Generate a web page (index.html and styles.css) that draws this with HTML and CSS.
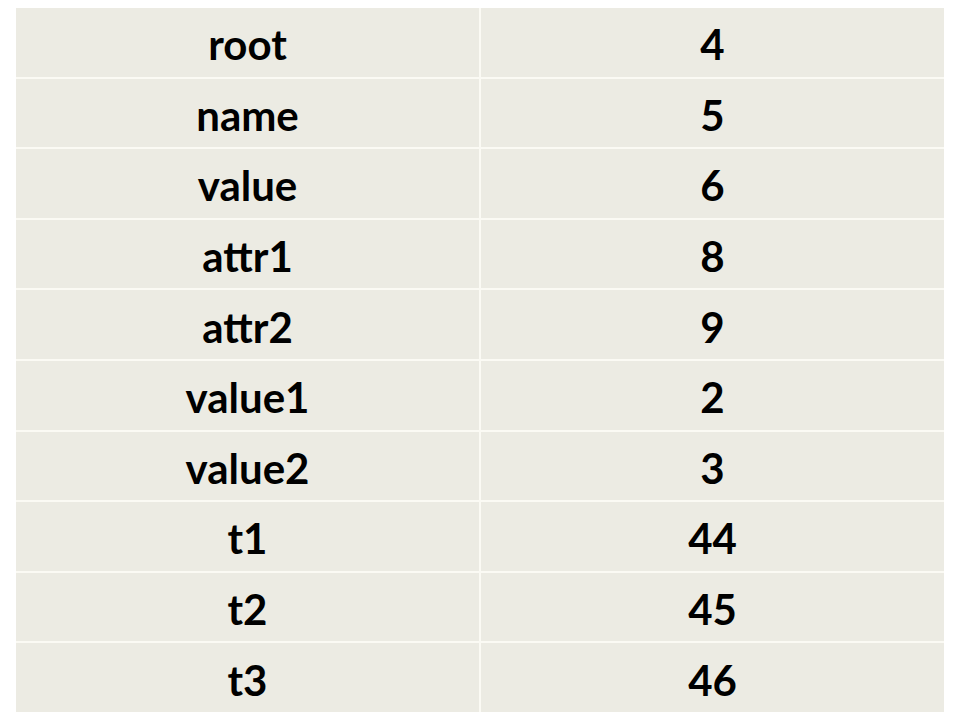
FILE: index.html
```html
<!DOCTYPE html>
<html>
<head>
<meta charset="utf-8">
<link rel="stylesheet" href="styles.css">
</head>
<body>
<div class="table">
  <div class="cell">root</div><div class="cell">4</div>
  <div class="cell">name</div><div class="cell">5</div>
  <div class="cell">value</div><div class="cell">6</div>
  <div class="cell">attr1</div><div class="cell">8</div>
  <div class="cell">attr2</div><div class="cell">9</div>
  <div class="cell">value1</div><div class="cell">2</div>
  <div class="cell">value2</div><div class="cell">3</div>
  <div class="cell">t1</div><div class="cell">44</div>
  <div class="cell">t2</div><div class="cell">45</div>
  <div class="cell">t3</div><div class="cell">46</div>
</div>
</body>
</html>
```
FILE: styles.css
```css
html, body {
  margin: 0;
  background: #ffffff;
}
body {
  padding: 8px 16px 8px 16px;
  width: 960px;
  height: 720px;
  box-sizing: border-box;
}
.table {
  display: grid;
  grid-template-columns: 1fr 1fr;
  grid-template-rows: repeat(10, 1fr);
  column-gap: 2px;
  row-gap: 2px;
  width: 928px;
  height: 704px;
  background: #fbfaf4;
}
.cell {
  background: #ecebe3;
  display: flex;
  align-items: center;
  justify-content: center;
  padding-top: 4px;
  font-family: "Lato", "Open Sans", sans-serif;
  font-weight: 700;
  font-size: 42px;
  color: #000;
}
```
